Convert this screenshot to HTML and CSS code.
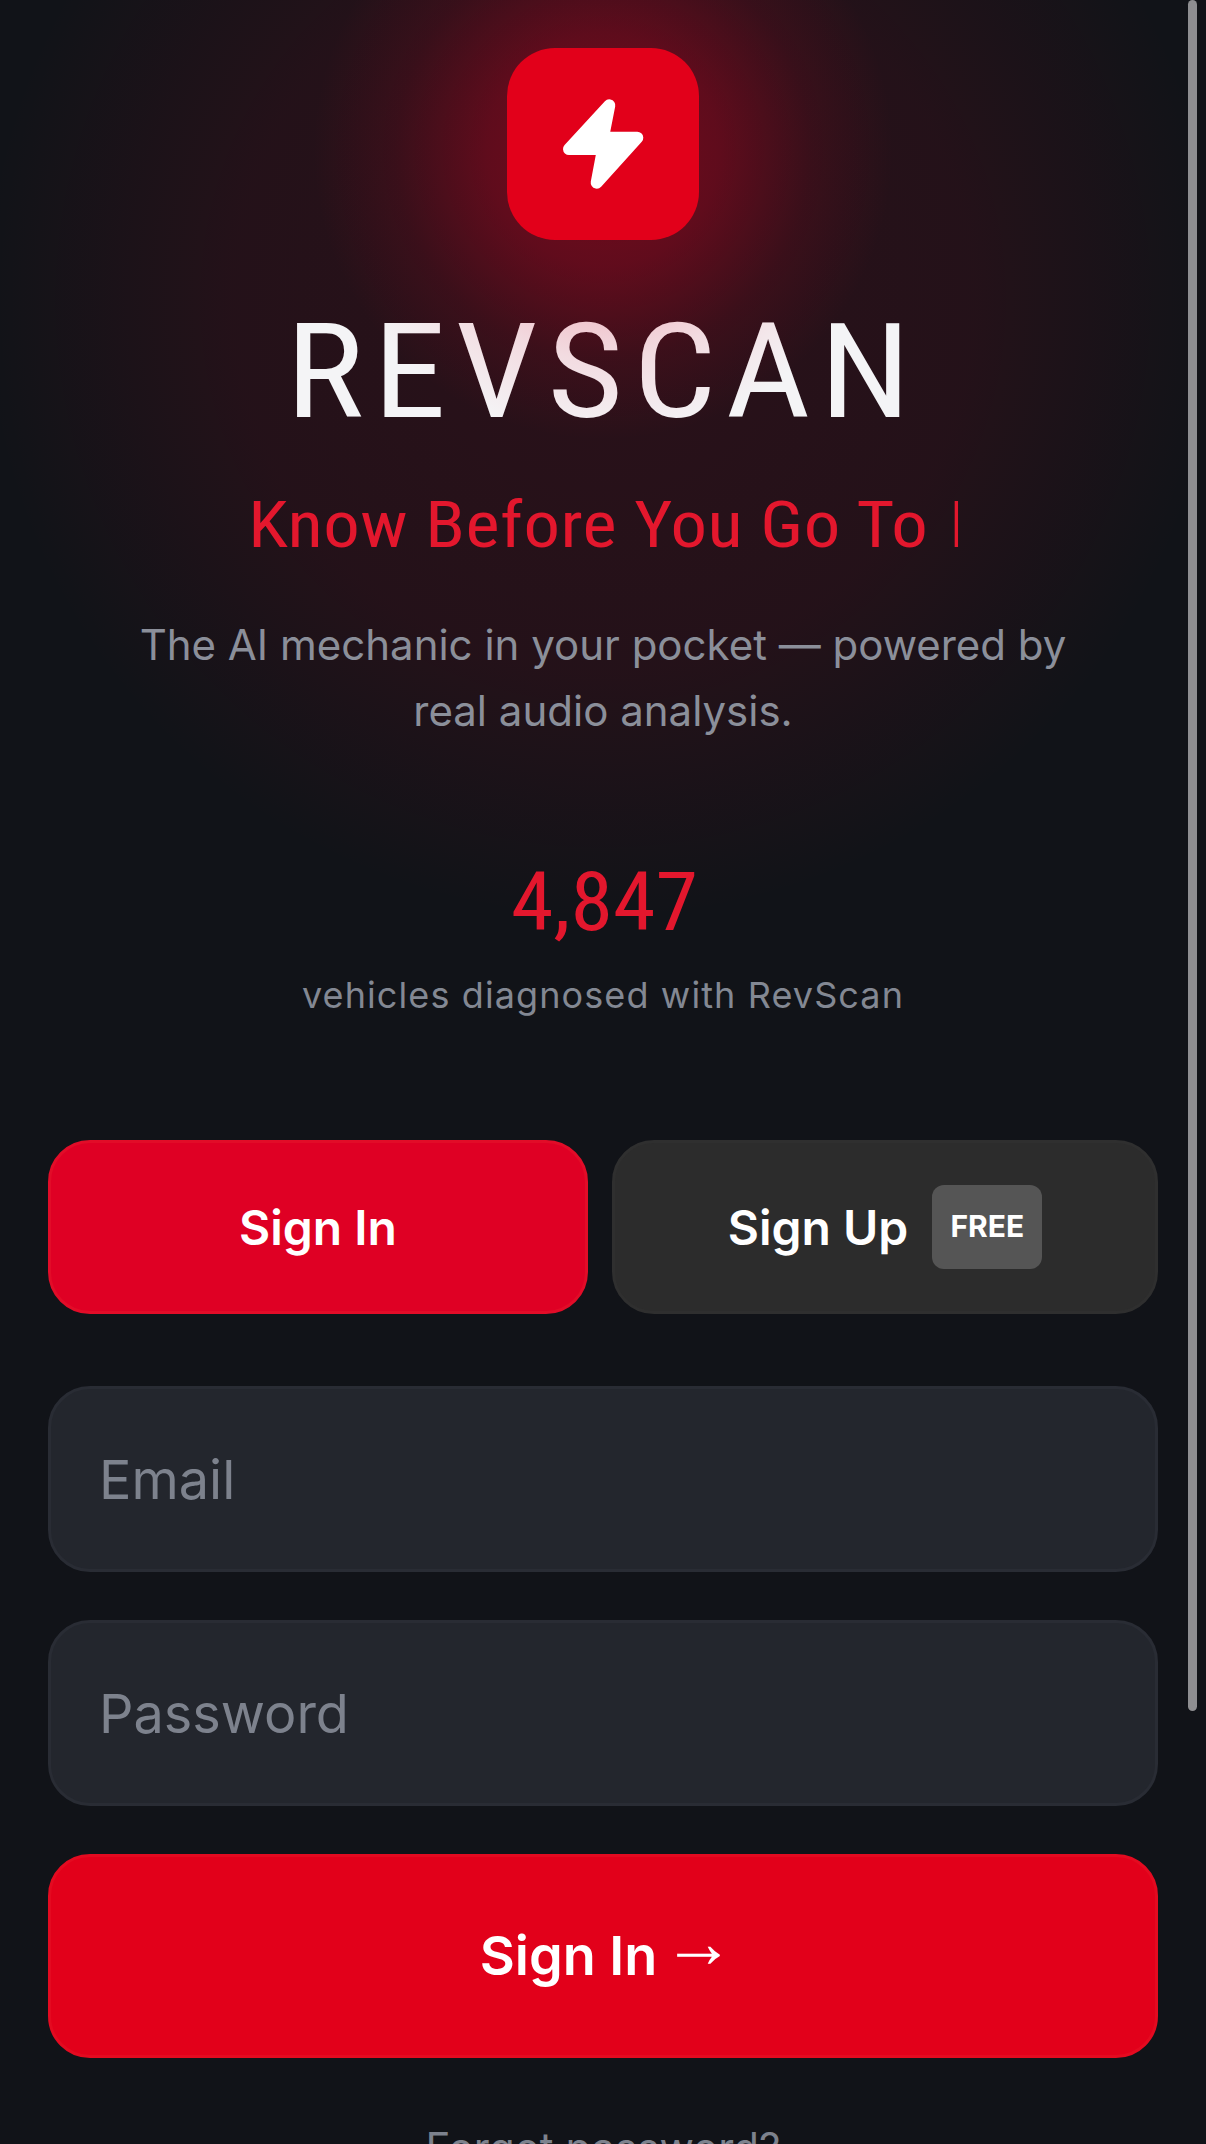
FILE: index.html
```html
<!DOCTYPE html>
<html lang="en">
<head>
	<meta charset="utf-8">
	<title>RevScan - Sign In</title>
	<link rel="stylesheet" href="styles.css">
</head>
<body>
	<div class="page">
		<div class="glow"></div>
		<header class="hero">
			<div class="logo">
				<svg class="bolt" width="80" height="88" viewBox="0 0 80 88">
					<path d="M46.3 5.3 L6 49 H40 L33.7 82.7 L74.3 37.7 H40 Z" fill="#fff" stroke="#fff" stroke-width="12" stroke-linejoin="round"/>
				</svg>
			</div>
			<h1 class="title">REVSCAN</h1>
			<p class="tagline">Know Before You Go To <span class="caret"></span></p>
			<p class="intro">The AI mechanic in your pocket — powered by<br>real audio analysis.</p>
			<div class="count">4,847</div>
			<p class="count-label">vehicles diagnosed with RevScan</p>
		</header>

		<div class="tabs">
			<button class="tab tab-active">Sign In</button>
			<button class="tab tab-signup">Sign Up <span class="badge">FREE</span></button>
		</div>

		<form class="form">
			<input class="field" type="email" placeholder="Email">
			<input class="field" type="password" placeholder="Password">
			<button class="submit" type="button">Sign In<span class="arrow">→</span></button>
		</form>

		<a class="forgot" href="#">Forgot password?</a>
		<div class="scroll-thumb"></div>
	</div>
</body>
</html>
```

FILE: styles.css
```css
* {
	box-sizing: border-box;
}
html, body {
	margin: 0;
	height: 2144px;
	overflow: hidden;
	background-color: #111318;
}
body {
	font-family: Inter, "Liberation Sans", sans-serif;
	color: #fff;
}
.page {
	position: relative;
	height: 2144px;
	padding: 48px 48px 0;
	overflow: hidden;
	background: radial-gradient(circle 620px at 603px 300px, rgba(225, 0, 35, 0.12) 0, rgba(225, 0, 35, 0.09) 60%, rgba(225, 0, 35, 0) 100%) no-repeat;
}
.glow {
	position: absolute;
	top: 0;
	left: 0;
	right: 0;
	height: 700px;
	z-index: 1;
	pointer-events: none;
	background: radial-gradient(circle 290px at 603px 150px, rgba(225, 0, 35, 0.42) 0, rgba(225, 0, 35, 0.3) 40%, rgba(225, 0, 35, 0.1) 72%, rgba(225, 0, 35, 0) 100%);
}
.hero {
	text-align: center;
}
.logo {
	position: relative;
	z-index: 2;
	width: 192px;
	height: 192px;
	margin: 0 auto;
	display: flex;
	align-items: center;
	justify-content: center;
	background-color: #e2001a;
	border-radius: 48px;
}
.bolt {
	overflow: visible;
}
/* Roboto Condensed is a bit too narrow here, widen it */
.title {
	margin: 60px 0 0;
	font-family: Roboto, sans-serif;
	font-stretch: 75%;
	font-size: 131px;
	line-height: 144px;
	font-weight: 400;
	letter-spacing: 8.5px;
	color: #f4f4f6;
	transform: scaleX(1.12);
}
.tagline {
	margin: 39px 0 0;
	font-family: Roboto, sans-serif;
	font-stretch: 75%;
	font-size: 65px;
	line-height: 84px;
	letter-spacing: 0.4px;
	color: #e3172d;
	transform: scaleX(1.12);
}
.caret {
	display: inline-block;
	width: 3px;
	height: 46px;
	margin-left: 8px;
	background-color: #e3172d;
}
.intro {
	margin: 45px 0 0;
	font-size: 42px;
	line-height: 66px;
	color: #8b8f9a;
}
.count {
	margin-top: 113px;
	padding-left: 3px;
	font-family: Roboto, sans-serif;
	font-stretch: 75%;
	font-size: 82px;
	line-height: 90px;
	color: #e3172d;
	transform: scaleX(1.05);
}
.count-label {
	margin: 24px 0 0;
	font-size: 36px;
	line-height: 48px;
	letter-spacing: 1.1px;
	color: #838893;
}
.tabs {
	display: flex;
	gap: 24px;
	margin-top: 121px;
}
.tab {
	height: 174px;
	border-radius: 42px;
	border: 3px solid transparent;
	font-family: inherit;
	font-size: 48px;
	font-weight: 600;
	color: #fff;
	display: flex;
	align-items: center;
	justify-content: center;
}
.tab-active {
	width: 540px;
	background-color: #df0024;
	border-color: #e20c28;
}
.tab-signup {
	width: 546px;
	gap: 24px;
	background-color: #2c2c2c;
	border-color: #2f2f2f;
}
.badge {
	width: 110px;
	height: 84px;
	padding-bottom: 3px;
	display: flex;
	align-items: center;
	justify-content: center;
	background-color: #555;
	border-radius: 12px;
	font-size: 30px;
	font-weight: 700;
}
.form {
	display: flex;
	flex-direction: column;
	gap: 48px;
	margin-top: 72px;
}
.field {
	height: 186px;
	padding: 0 48px;
	background-color: #23262d;
	border: 3px solid #292c34;
	border-radius: 42px;
	font-family: inherit;
	font-size: 54px;
	color: #fff;
}
.field::placeholder {
	color: #7d828d;
	opacity: 1;
}
.submit {
	height: 204px;
	padding-bottom: 3px;
	background-color: #e2001a;
	border: 3px solid #e40a20;
	border-radius: 42px;
	font-family: inherit;
	font-size: 54px;
	font-weight: 600;
	color: #fff;
}
.arrow {
	margin-left: 5px;
	margin-right: -8px;
	font-family: "Liberation Sans", sans-serif;
	font-size: 72px;
	font-weight: 400;
	line-height: 0;
	vertical-align: 8px;
}
.forgot {
	display: block;
	margin-top: 60px;
	text-align: center;
	font-size: 42px;
	line-height: 60px;
	color: #7d828d;
	text-decoration: none;
}
.scroll-thumb {
	position: absolute;
	top: 0;
	left: 1188px;
	width: 9px;
	height: 1711px;
	border-radius: 5px;
	background-color: #8e8e91;
	z-index: 3;
}
```
